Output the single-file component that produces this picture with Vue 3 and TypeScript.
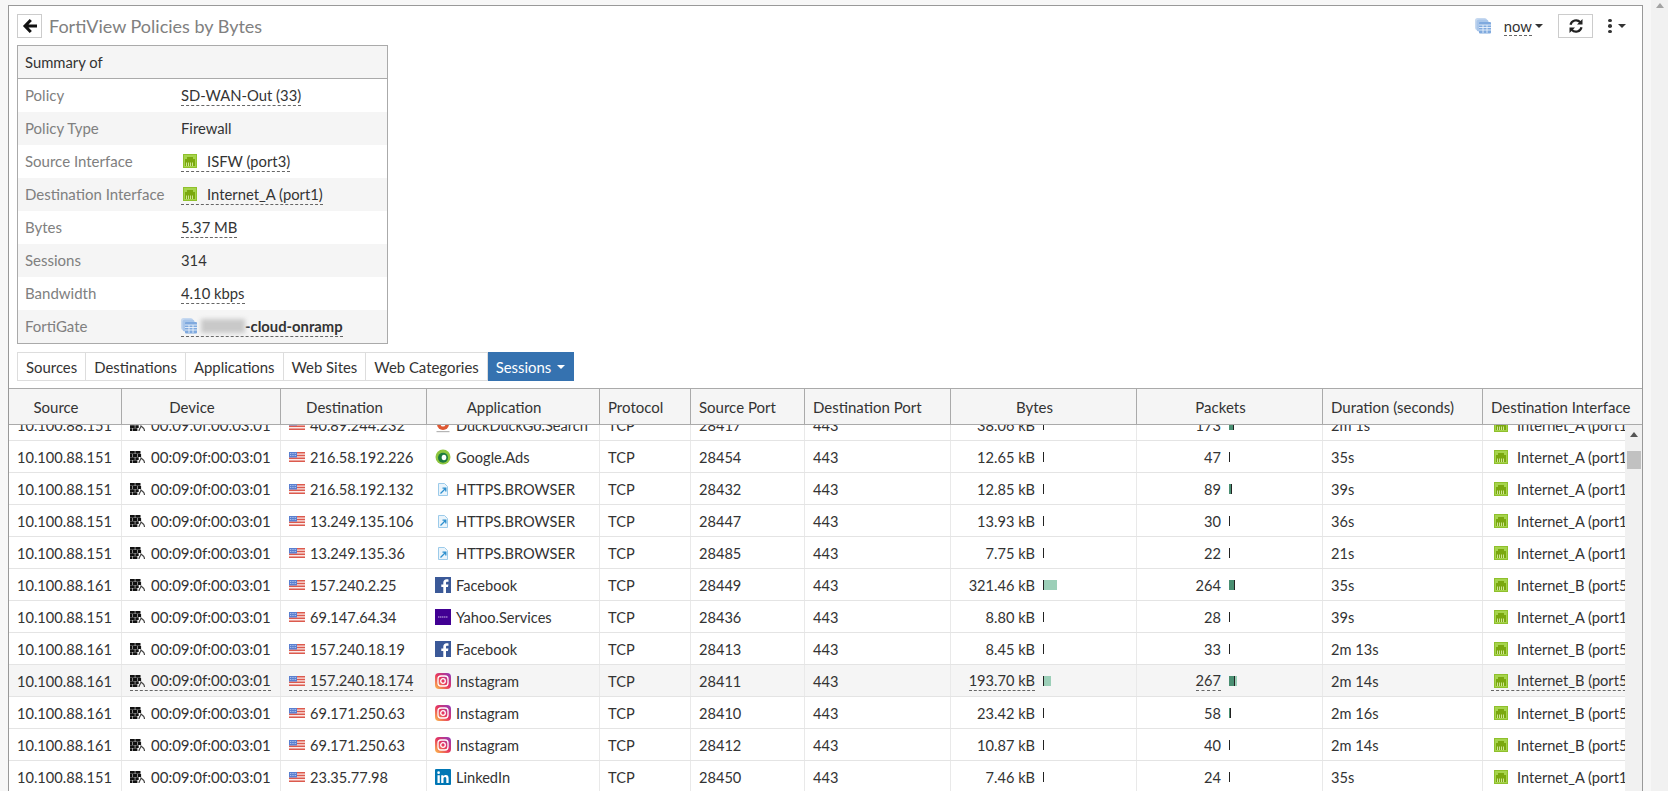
<template>
  <div class="panel">
    <div class="topbar">
      <div class="title-wrap">
        <button class="back-btn" type="button">
          <svg width="16" height="16" viewBox="0 0 16 16">
            <path d="M8.800 2 3 8l5.800 6M3.500 8H15" fill="none" stroke="#111" stroke-width="3" />
          </svg>
        </button>
        <span class="title">FortiView Policies by Bytes</span>
      </div>
      <div class="tools">
        <svg class="fgt-icon" width="16" height="16" viewBox="0 0 16 16">
          <rect x="0" y="0" width="12" height="12" rx="2.500" fill="#c6d9f0" />
          <rect x="1.500" y="1.500" width="12" height="12" rx="2.500" fill="#a9c6ea" />
          <rect x="4" y="4" width="12" height="11.500" rx="1" fill="#7fa9de" />
          <path d="M4 7h12M4 9.500h12M4 12h12M8 7v8M12 7v8" stroke="#eaf2fb" stroke-width="0.900" />
        </svg>
        <span class="now dashed">now</span><span class="caret"></span>
        <button class="refresh-btn" type="button">
          <svg width="16" height="16" viewBox="0 0 16 16">
            <path d="M2.500 6.800A5.700 5.700 0 0 1 12.300 4.200M13.500 9.200A5.700 5.700 0 0 1 3.700 11.800" fill="none" stroke="#222" stroke-width="2.200" />
            <path d="M14.500 1v5.500H9zM1.500 15V9.500H7z" fill="#222" />
          </svg>
        </button>
        <span class="kebab"><i></i><i></i><i></i></span><span class="caret kebab-caret"></span>
      </div>
    </div>

    <div class="summary">
      <div class="summary-head">Summary of</div>
      <div v-for="row in summary" :key="row.label" class="summary-row">
        <span class="summary-label">{{ row.label }}</span>
        <span :class="{ dashed: row.dashed }" class="summary-value">
          <svg v-if="row.icon === 'port'" class="port-icon" width="14" height="14" viewBox="0 0 14 14">
            <rect x="0.500" y="0.500" width="13" height="13" fill="#a6d44c" stroke="#8fc02c" />
            <path d="M2 12V5h2V3h6v2h2v7z" fill="#7aa80f" />
            <path d="M3.500 8.500V12M5.500 8.500V12M7.500 8.500V12M9.500 8.500V12" stroke="#d8ecA4" stroke-width="0.900" />
          </svg>
          <svg v-if="row.icon === 'fgt'" class="fgt-inline" width="16" height="16" viewBox="0 0 16 16">
            <rect x="0" y="0" width="12" height="12" rx="2.500" fill="#c6d9f0" />
            <rect x="1.500" y="1.500" width="12" height="12" rx="2.500" fill="#a9c6ea" />
            <rect x="4" y="4" width="12" height="11.500" rx="1" fill="#7fa9de" />
            <path d="M4 7h12M4 9.500h12M4 12h12M8 7v8M12 7v8" stroke="#eaf2fb" stroke-width="0.900" />
          </svg>
          <template v-if="row.icon === 'fgt'">
            <span class="blurred"></span><b>-cloud-onramp</b>
          </template>
          <template v-else>{{ row.value }}</template>
        </span>
      </div>
    </div>

    <div class="tabs">
      <span v-for="t in tabs" :key="t" class="tab">{{ t }}</span>
      <span class="tab active">Sessions <i class="caret white"></i></span>
    </div>

    <div class="grid-wrap">
      <div class="grid-row grid-head">
        <div v-for="h in headers" :key="h.name" class="cell" :class="h.cls">{{ h.name }}</div>
      </div>
      <div class="grid-body">
        <div class="viewport">
          <div class="rows">
            <div
              v-for="(r, i) in sessions"
              :key="i"
              class="grid-row data"
              :class="{ hovered: r.hover }"
            >
              <div class="cell">{{ r.src }}</div>
              <div class="cell">
                <span class="cell-inner" :class="{ dashed: r.hover }">
                  <svg class="device-icon" width="15" height="12" viewBox="0 0 15 12">
                    <path d="M0 0h4.800v2.800H0zM5.300 0h5.200v2.800H5.300zM0 3.100h2.200v2.800H0zM2.700 3.100h4.700v2.800H2.700zM7.900 3.100h3.200v2.800H7.900zM0 6.200h4.800v2.800H0zM5.300 6.200h3.400v2.800H5.300zM0 9.300h2.200V12H0zM2.700 9.300h4.700V12H2.700z" fill="#111" />
                    <path d="M9 12c0-2 1.500-2.500 2-5 1.500 1 3.500 3 3.500 5" fill="none" stroke="#444" stroke-width="1.200" />
                  </svg>
                  <span class="mac">00:09:0f:00:03:01</span>
                </span>
              </div>
              <div class="cell">
                <span class="cell-inner" :class="{ dashed: r.hover }">
                  <svg class="flag" width="16" height="10" viewBox="0 0 16 10">
                    <rect width="16" height="10" fill="#fbe9e7" />
                    <path d="M0 .7h16M0 3.500h16M0 6.300h16M0 9.200h16" stroke="#dc5a4e" stroke-width="1.400" />
                    <rect width="8" height="5.500" fill="#5a7fd0" />
                    <path d="M1 1.500h6M1 3.500h6" stroke="#cfdcf5" stroke-width="0.700" stroke-dasharray="1 .7" />
                  </svg>
                  <span>{{ r.dst }}</span>
                </span>
              </div>
              <div class="cell">
                <span class="cell-inner">
                  <svg v-if="r.icon === 'duck'" class="app-icon" width="16" height="16" viewBox="0 0 16 16">
                    <circle cx="8" cy="7" r="6" fill="#de5833" />
                    <circle cx="8" cy="7" r="2.500" fill="#fff" />
                    <rect x="1.500" y="14" width="13" height="1.200" fill="#b5b5b5" />
                  </svg>
                  <svg v-else-if="r.icon === 'ads'" class="app-icon" width="16" height="16" viewBox="0 0 16 16">
                    <circle cx="8" cy="8" r="7.500" fill="#8ec63f" />
                    <circle cx="8" cy="8.800" r="5" fill="#1d7a3f" />
                    <ellipse cx="9" cy="8.500" rx="2.300" ry="2.700" fill="#fff" />
                  </svg>
                  <svg v-else-if="r.icon === 'https'" class="app-icon" width="16" height="16" viewBox="0 0 16 16">
                    <path d="M3.500 2.500h6l3 3v9h-9z" fill="#eaf4fb" stroke="#9ccbea" />
                    <path d="M5.500 12.500l5-5M7.500 7.200H10.800V10.500" fill="none" stroke="#2d8fce" stroke-width="1.300" />
                  </svg>
                  <svg v-else-if="r.icon === 'fb'" class="app-icon" width="16" height="16" viewBox="0 0 16 16">
                    <rect width="16" height="16" fill="#3b5998" />
                    <path d="M11 16V10h2l.4-2.500H11V6c0-.8.3-1.300 1.300-1.300h1.200V2.400c-.4 0-1.100-.1-1.900-.1-2 0-3.300 1.200-3.300 3.400v1.800H6.300V10h2v6z" fill="#fff" />
                  </svg>
                  <svg v-else-if="r.icon === 'yahoo'" class="app-icon" width="16" height="16" viewBox="0 0 16 16">
                    <rect width="16" height="16" fill="#410093" />
                    <path d="M3 8h10" stroke="#c9b3e8" stroke-width="1.200" stroke-dasharray="1.500 .5" />
                  </svg>
                  <svg v-else-if="r.icon === 'ig'" class="app-icon" width="16" height="16" viewBox="0 0 16 16">
                    <defs>
                      <linearGradient :id="'ig' + i" x1="0" y1="1" x2="1" y2="0">
                        <stop offset="0" stop-color="#fdc04c" />
                        <stop offset="0.500" stop-color="#e6365f" />
                        <stop offset="1" stop-color="#8a3ac0" />
                      </linearGradient>
                    </defs>
                    <rect width="16" height="16" rx="4" :fill="`url(#ig${i})`" />
                    <rect x="3" y="3" width="10" height="10" rx="3" fill="none" stroke="#fff" stroke-width="1.300" />
                    <circle cx="8" cy="8" r="2.300" fill="none" stroke="#fff" stroke-width="1.300" />
                  </svg>
                  <svg v-else-if="r.icon === 'in'" class="app-icon" width="16" height="16" viewBox="0 0 16 16">
                    <rect width="16" height="16" rx="1" fill="#0077b5" />
                    <path d="M2.500 6.200h2.300V14H2.500zM3.600 2.300a1.300 1.300 0 1 1 0 2.700 1.300 1.300 0 0 1 0-2.700zM6.200 6.200h2.200v1.100c.4-.7 1.200-1.300 2.400-1.300 2.400 0 2.800 1.500 2.800 3.600V14h-2.300V10c0-1 0-2-1.300-2s-1.500 1-1.500 2v4H6.200z" fill="#fff" />
                  </svg>
                  <span>{{ r.app }}</span>
                </span>
              </div>
              <div class="cell">TCP</div>
              <div class="cell">{{ r.port }}</div>
              <div class="cell">443</div>
              <div class="cell metric">
                <span class="metric-text"><span :class="{ dashed: r.hover }">{{ r.bytes }}</span></span>
                <span class="bar-slot">
                  <i class="tick"></i><i class="bar light" :style="{ width: r.bytesBar + 'px' }"></i>
                </span>
              </div>
              <div class="cell metric">
                <span class="metric-text"><span :class="{ dashed: r.hover }">{{ r.packets }}</span></span>
                <span class="bar-slot">
                  <i class="bar dark" :style="{ width: r.pktBar + 'px' }"></i><i class="tick"></i><i class="bar light" :style="{ width: r.pktExtra + 'px' }"></i>
                </span>
              </div>
              <div class="cell">{{ r.dur }}</div>
              <div class="cell">
                <span class="cell-inner" :class="{ dashed: r.hover }">
                  <svg class="port-icon row-port" width="14" height="14" viewBox="0 0 14 14">
                    <rect x="0.500" y="0.500" width="13" height="13" fill="#a6d44c" stroke="#8fc02c" />
                    <path d="M2 12V5h2V3h6v2h2v7z" fill="#7aa80f" />
                    <path d="M3.500 8.500V12M5.500 8.500V12M7.500 8.500V12M9.500 8.500V12" stroke="#d8ecA4" stroke-width="0.900" />
                  </svg>
                  <span>{{ r.iface }}</span>
                </span>
              </div>
            </div>
          </div>
        </div>
        <div class="scrollbar">
          <span class="arrow"></span>
          <span class="thumb"></span>
        </div>
      </div>
    </div>
  </div>
  <div class="page-scroll"><span class="arrow gray"></span></div>
</template>

<script setup lang="ts">
interface SummaryRow {
  label: string
  value: string
  dashed?: boolean
  icon?: 'port' | 'fgt'
}

interface SessionRow {
  src: string
  dst: string
  app: string
  icon: string
  port: number
  bytes: string
  bytesBar: number
  packets: number
  pktBar: number
  pktExtra: number
  dur: string
  iface: string
  hover?: boolean
}

const summary: SummaryRow[] = [
  { label: 'Policy', value: 'SD-WAN-Out (33)', dashed: true },
  { label: 'Policy Type', value: 'Firewall' },
  { label: 'Source Interface', value: 'ISFW (port3)', dashed: true, icon: 'port' },
  { label: 'Destination Interface', value: 'Internet_A (port1)', dashed: true, icon: 'port' },
  { label: 'Bytes', value: '5.37 MB', dashed: true },
  { label: 'Sessions', value: '314' },
  { label: 'Bandwidth', value: '4.10 kbps', dashed: true },
  { label: 'FortiGate', value: '-cloud-onramp', dashed: true, icon: 'fgt' },
]

const tabs = ['Sources', 'Destinations', 'Applications', 'Web Sites', 'Web Categories']

const headers = [
  { name: 'Source', cls: 'center' },
  { name: 'Device', cls: 'center' },
  { name: 'Destination', cls: 'center' },
  { name: 'Application', cls: 'center' },
  { name: 'Protocol', cls: '' },
  { name: 'Source Port', cls: '' },
  { name: 'Destination Port', cls: '' },
  { name: 'Bytes', cls: 'center' },
  { name: 'Packets', cls: 'center' },
  { name: 'Duration (seconds)', cls: '' },
  { name: 'Destination Interface', cls: '' },
]

const portA = 'Internet_A (port1)'
const portB = 'Internet_B (port5)'

const sessions: SessionRow[] = [
  { src: '10.100.88.151', dst: '40.89.244.232', app: 'DuckDuckGo.Search', icon: 'duck', port: 28417, bytes: '38.06 kB', bytesBar: 0, packets: 173, pktBar: 4, pktExtra: 0, dur: '2m 1s', iface: portA },
  { src: '10.100.88.151', dst: '216.58.192.226', app: 'Google.Ads', icon: 'ads', port: 28454, bytes: '12.65 kB', bytesBar: 0, packets: 47, pktBar: 0, pktExtra: 0, dur: '35s', iface: portA },
  { src: '10.100.88.151', dst: '216.58.192.132', app: 'HTTPS.BROWSER', icon: 'https', port: 28432, bytes: '12.85 kB', bytesBar: 0, packets: 89, pktBar: 2, pktExtra: 0, dur: '39s', iface: portA },
  { src: '10.100.88.151', dst: '13.249.135.106', app: 'HTTPS.BROWSER', icon: 'https', port: 28447, bytes: '13.93 kB', bytesBar: 0, packets: 30, pktBar: 0, pktExtra: 0, dur: '36s', iface: portA },
  { src: '10.100.88.151', dst: '13.249.135.36', app: 'HTTPS.BROWSER', icon: 'https', port: 28485, bytes: '7.75 kB', bytesBar: 0, packets: 22, pktBar: 0, pktExtra: 0, dur: '21s', iface: portA },
  { src: '10.100.88.161', dst: '157.240.2.25', app: 'Facebook', icon: 'fb', port: 28449, bytes: '321.46 kB', bytesBar: 13, packets: 264, pktBar: 5, pktExtra: 0, dur: '35s', iface: portB },
  { src: '10.100.88.151', dst: '69.147.64.34', app: 'Yahoo.Services', icon: 'yahoo', port: 28436, bytes: '8.80 kB', bytesBar: 0, packets: 28, pktBar: 0, pktExtra: 0, dur: '39s', iface: portA },
  { src: '10.100.88.161', dst: '157.240.18.19', app: 'Facebook', icon: 'fb', port: 28413, bytes: '8.45 kB', bytesBar: 0, packets: 33, pktBar: 0, pktExtra: 0, dur: '2m 13s', iface: portB },
  { src: '10.100.88.161', dst: '157.240.18.174', app: 'Instagram', icon: 'ig', port: 28411, bytes: '193.70 kB', bytesBar: 7, packets: 267, pktBar: 5, pktExtra: 2, dur: '2m 14s', iface: portB, hover: true },
  { src: '10.100.88.161', dst: '69.171.250.63', app: 'Instagram', icon: 'ig', port: 28410, bytes: '23.42 kB', bytesBar: 0, packets: 58, pktBar: 1, pktExtra: 0, dur: '2m 16s', iface: portB },
  { src: '10.100.88.161', dst: '69.171.250.63', app: 'Instagram', icon: 'ig', port: 28412, bytes: '10.87 kB', bytesBar: 0, packets: 40, pktBar: 0, pktExtra: 0, dur: '2m 14s', iface: portB },
  { src: '10.100.88.151', dst: '23.35.77.98', app: 'LinkedIn', icon: 'in', port: 28450, bytes: '7.46 kB', bytesBar: 0, packets: 24, pktBar: 0, pktExtra: 0, dur: '35s', iface: portA },
]
</script>

<style scoped>
.panel {
  margin: 5px 0 0 8px;
  width: 1635px;
  height: 786px;
  box-sizing: border-box;
  background: #fff;
  border: 1px solid #999;
  border-bottom: 0;
  overflow: hidden;
  font-family: Lato, 'Liberation Sans', sans-serif;
  font-size: 14.8px;
  color: #333;
}

.topbar {
  display: flex;
  justify-content: space-between;
  padding: 8px 0 0 8px;
  height: 31px;
  box-sizing: border-box;
}

.title-wrap {
  display: flex;
  align-items: center;
  height: 24px;
}

.back-btn,
.refresh-btn {
  display: flex;
  align-items: center;
  justify-content: center;
  padding: 0;
  background: #fff;
  border: 1px solid #ccc;
}

.back-btn {
  width: 25px;
  height: 24px;
}

.title {
  margin-left: 7px;
  font-size: 18px;
  color: #808080;
}

.tools {
  display: flex;
  align-items: center;
  height: 24px;
  padding-right: 16px;
}

.fgt-icon {
  margin-right: 13px;
}

.now {
  line-height: 18px;
}

.caret {
  display: inline-block;
  width: 0;
  height: 0;
  margin-left: 3px;
  border-left: 4px solid transparent;
  border-right: 4px solid transparent;
  border-top: 4px solid #333;
}

.caret.white {
  margin-left: 2px;
  vertical-align: 2px;
  border-top-color: #fff;
}

.kebab-caret {
  margin-left: 6px;
}

.refresh-btn {
  width: 35px;
  height: 24px;
  margin: 0 15px 0 15px;
}

.kebab {
  display: flex;
  flex-direction: column;
  gap: 2px;
}

.kebab i {
  display: block;
  width: 4px;
  height: 3.500px;
  border-radius: 50%;
  background: #333;
}

.dashed {
  border-bottom: 1px dashed #666;
}

.summary {
  width: 371px;
  margin: 8px 0 0 8px;
  border: 1px solid #aaa;
  box-sizing: border-box;
}

.summary-head {
  height: 32px;
  line-height: 33px;
  padding-left: 7px;
  background: #f5f5f5;
  border-bottom: 1px solid #aaa;
  color: #333;
}

.summary-row {
  display: flex;
  align-items: center;
  height: 33px;
  padding-left: 7px;
}

.summary-row:nth-child(odd) {
  background: #f5f5f5;
}

.summary-label {
  width: 156px;
  padding-bottom: 2px;
  font-size: 15px;
  color: #808080;
}

.summary-value {
  display: inline-flex;
  align-items: center;
  white-space: nowrap;
  line-height: 19px;
}

.port-icon {
  margin-right: 10px;
  margin-left: 2px;
}

.fgt-inline {
  margin-right: 4px;
}

.blurred {
  display: inline-block;
  width: 44px;
  height: 14px;
  background: #c9c9c9;
  filter: blur(2px);
}

.summary-value b {
  font-size: 14.800px;
  font-weight: 700;
}

.tabs {
  display: flex;
  margin: 8px 0 0 8px;
  height: 29px;
  width: fit-content;
  box-sizing: border-box;
  border: 1px solid #ddd;
  border-right: 0;
  font-size: 14.9px;
}

.tab {
  display: flex;
  align-items: center;
  gap: 4px;
  padding: 0 8px;
  border-right: 1px solid #ddd;
  white-space: nowrap;
}

.tab.active {
  background: #3572b0;
  color: #fff;
  border-right-color: #3572b0;
  margin: -1px 0;
}

.grid-wrap {
  margin-top: 7px;
  border-top: 1px solid #aaa;
}

.grid-row {
  display: grid;
  grid-template-columns: 113px 159px 146px 173px 91px 114px 146px 186px 186px 160px 159px;
  width: 1633px;
}

.grid-head {
  height: 35px;
  background: #f5f5f5;
  border-bottom: 1px solid #aaa;
  font-size: 15px;
}

.grid-head .cell {
  border-right: 1px solid #aaa;
  line-height: 37px;
}

.grid-head .cell:last-child {
  border-right: 0;
}

.grid-head .center {
  text-align: center;
  padding-right: 26px;
}

.cell {
  box-sizing: border-box;
  padding: 0 7px 0 8px;
  white-space: nowrap;
  overflow: hidden;
}

.grid-body {
  display: flex;
  height: 366px;
}

.viewport {
  flex: 1;
  min-width: 0;
  overflow: hidden;
}

.rows {
  margin-top: -16px;
  font-size: 14.6px;
}

.data {
  height: 32px;
  box-sizing: border-box;
  border-bottom: 1px solid #e4e4e4;
}

.data .cell {
  display: flex;
  align-items: center;
  padding-top: 1px;
  border-right: 1px solid #e9e9e9;
}

.data.hovered {
  background: #f5f5f5;
}

.cell-inner {
  display: inline-flex;
  align-items: center;
  height: 19px;
  line-height: 19px;
  flex: none;
}

.mac {
  font-size: 15px;
}

.device-icon,
.flag,
.app-icon {
  margin-right: 5px;
  flex: none;
}

.device-icon {
  margin-right: 6px;
}

.row-port {
  margin: 0 9px 0 3px;
  flex: none;
}

.data .metric {
  padding: 1px 0 0;
}

.metric-text {
  display: flex;
  justify-content: flex-end;
  width: 84px;
  line-height: 19px;
  white-space: nowrap;
}

.bar-slot {
  display: flex;
  margin-left: 8px;
  height: 10px;
}

.bar-slot i {
  display: block;
  height: 10px;
}

.tick {
  width: 1px;
  background: #222;
}

.bar.light {
  background: #9ccfb8;
}

.bar.dark {
  background: #4a8f72;
}

.scrollbar {
  flex: 0 0 17px;
  background: #f1f1f1;
  display: flex;
  flex-direction: column;
  align-items: center;
  padding-top: 7px;
  box-sizing: border-box;
}

.arrow {
  width: 0;
  height: 0;
  border-left: 4px solid transparent;
  border-right: 4px solid transparent;
  border-bottom: 5px solid #555;
}

.arrow.gray {
  border-bottom-color: #a3a3a3;
}

.thumb {
  display: block;
  width: 14px;
  height: 18px;
  margin-top: 14px;
  background: #c1c1c1;
}

.page-scroll {
  position: fixed;
  top: 0;
  right: 0;
  width: 17px;
  height: 791px;
  background: #f1f1f1;
  display: flex;
  justify-content: center;
  padding-top: 3px;
  box-sizing: border-box;
}
</style>

<style>
html,
body {
  margin: 0;
  height: 791px;
  overflow: hidden;
  background: #f7f7f7;
}
</style>
